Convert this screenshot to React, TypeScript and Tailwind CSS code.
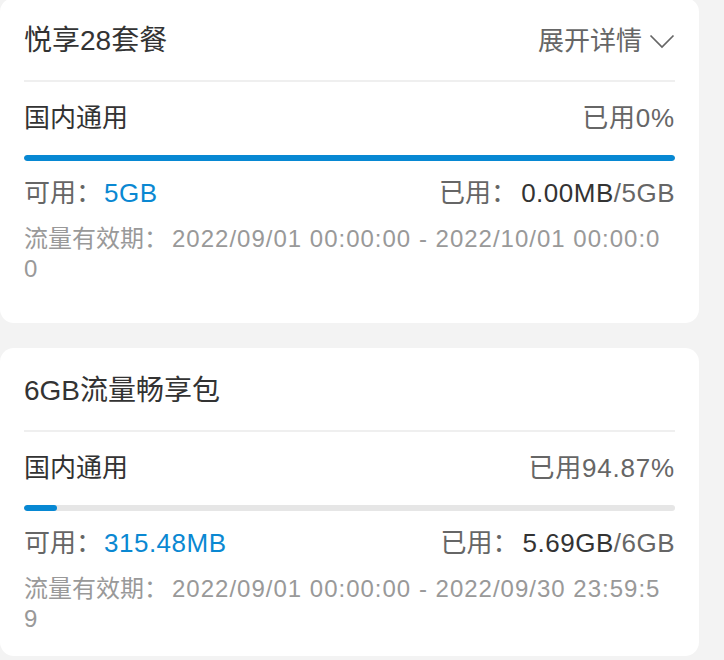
import React from "react";

const FONT = '"Liberation Sans", "Noto Sans CJK SC", sans-serif';

type CardProps = {
  title: string;
  showExpand?: boolean;
  usedPct: string;
  fillPct: number;
  available: string;
  used: string;
  total: string;
  dateLine1: string;
  dateLine2: string;
  bottomPad: string;
  first?: boolean;
};

function Chevron() {
  return (
    <svg width="26" height="15" viewBox="0 0 26 15" className="ml-[7px] mt-[1px]" fill="none">
      <polyline points="1.5,1.5 13,13 24.5,1.5" stroke="#666666" strokeWidth="1.7" strokeLinejoin="miter" />
    </svg>
  );
}

function Card(p: CardProps) {
  return (
    <div className={`w-[699px] bg-white rounded-[14px] px-[24px] ${p.bottomPad} ${p.first ? "mt-[-2px]" : "mt-[25px]"}`}>
      <div className="h-[82px] pt-[4px] flex items-center justify-between">
        <div className="text-[28px] leading-[34px] text-[#333333]">{p.title}</div>
        {p.showExpand && (
          <div className="flex items-center text-[26px] leading-[34px] text-[#666666]">
            <span>展开详情</span>
            <Chevron />
          </div>
        )}
      </div>
      <div className="h-[2px] bg-[#efefef]" />
      <div className="mt-[20px] flex items-center justify-between text-[26px] leading-[32px]">
        <span className="text-[#333333]">国内通用</span>
        <span className="text-[#666666] tracking-[0.8px]">{p.usedPct}</span>
      </div>
      <div className="mt-[21px] h-[6px] rounded-full bg-[#e6e6e6] overflow-hidden">
        <div className="h-full rounded-full bg-[#0788d3]" style={{ width: `${p.fillPct}%` }} />
      </div>
      <div className="mt-[16px] flex items-center justify-between text-[26px] leading-[32px]">
        <span>
          <span className="text-[#666666]">可用：</span>
          <span className="text-[#0a88d2] ml-[2px] tracking-[0.5px]">{p.available}</span>
        </span>
        <span>
          <span className="text-[#666666]">已用：</span>
          <span className="text-[#333333] ml-[4px] tracking-[0.5px]">{p.used}</span>
          <span className="text-[#666666] tracking-[0.5px]">/{p.total}</span>
        </span>
      </div>
      <div className="mt-[15px] text-[24px] leading-[30px] text-[#999999]">
        <div className="whitespace-nowrap">
          <span>流量有效期：</span>
          <span className="tracking-[1px] ml-[4px]">{p.dateLine1}</span>
        </div>
        <div className="tracking-[1px]">{p.dateLine2}</div>
      </div>
    </div>
  );
}

export default function App() {
  return (
    <div className="w-[724px] h-[660px] bg-[#f3f3f3] overflow-hidden" style={{ fontFamily: FONT }}>
      <Card
        first
        title="悦享28套餐"
        showExpand
        usedPct="已用0%"
        fillPct={100}
        available="5GB"
        used="0.00MB"
        total="5GB"
        dateLine1="2022/09/01 00:00:00 - 2022/10/01 00:00:0"
        dateLine2="0"
        bottomPad="pb-[39px]"
      />
      <Card
        title="6GB流量畅享包"
        usedPct="已用94.87%"
        fillPct={5.13}
        available="315.48MB"
        used="5.69GB"
        total="6GB"
        dateLine1="2022/09/01 00:00:00 - 2022/09/30 23:59:5"
        dateLine2="9"
        bottomPad="pb-[22px]"
      />
    </div>
  );
}
